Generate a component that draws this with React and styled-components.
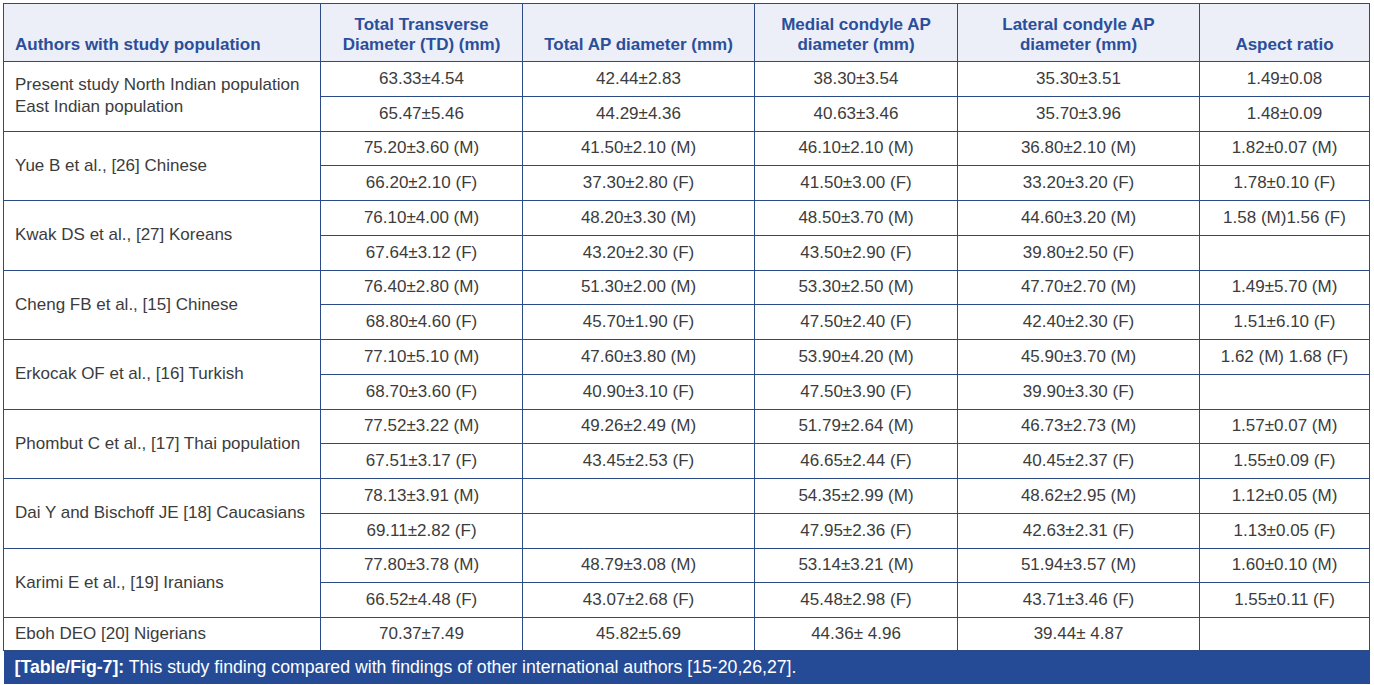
import React from 'react';
import styled, { createGlobalStyle } from 'styled-components';

const colors = {
  border: '#2b4a86',
  headBg: '#eceff7',
  headText: '#2b4e9b',
  text: '#3c3c3c',
  caption: '#254b96'
};

const GlobalStyle = createGlobalStyle`
  html, body {
    margin: 0;
    padding: 0;
    background: #ffffff;
  }
  body {
    font-family: 'Liberation Sans', Arial, Helvetica, sans-serif;
  }
`;

const Page = styled.div`
  padding: 3px 5px 2px 3px;
`;

const Table = styled.table`
  width: 1366px;
  border-collapse: collapse;
  table-layout: fixed;
  font-size: 17px;
  color: ${colors.text};
`;

const HeadCell = styled.th`
  height: 58px;
  box-sizing: border-box;
  padding: 0 14px 6px;
  vertical-align: bottom;
  text-align: ${props => (props.$left ? 'left' : 'center')};
  padding-left: ${props => (props.$left ? '11px' : '14px')};
  background: ${colors.headBg};
  color: ${colors.headText};
  font-weight: bold;
  line-height: 20px;
  border: 1px solid ${colors.border};
`;

const Row = styled.tr`
  height: ${props => props.$h || 34.75}px;
`;

const AuthorCell = styled.td`
  padding: 0 6px 0 11px;
  line-height: 22px;
  vertical-align: middle;
  border: 1px solid ${colors.border};
  white-space: nowrap;
`;

const ValueCell = styled.td`
  padding: 0 4px;
  text-align: center;
  vertical-align: middle;
  line-height: 20px;
  border: 1px solid ${colors.border};
  white-space: nowrap;
`;

const CaptionCell = styled.td`
  height: 33px;
  padding: 0 0 0 11px;
  background: ${colors.caption};
  color: #ffffff;
  font-size: 17.7px;
  vertical-align: middle;
  border: none;
  b {
    font-weight: bold;
  }
`;

const headers = [
  'Authors with study population',
  'Total Transverse Diameter (TD) (mm)',
  'Total AP diameter (mm)',
  'Medial condyle AP diameter (mm)',
  'Lateral condyle AP diameter (mm)',
  'Aspect ratio'
];

const widths = [317, 202, 232, 203, 242, 170];

const groups = [
  {
    author: ['Present study North Indian population', 'East Indian population'],
    rows: [
      ['63.33±4.54', '42.44±2.83', '38.30±3.54', '35.30±3.51', '1.49±0.08'],
      ['65.47±5.46', '44.29±4.36', '40.63±3.46', '35.70±3.96', '1.48±0.09']
    ]
  },
  {
    author: ['Yue B et al., [26] Chinese'],
    rows: [
      ['75.20±3.60 (M)', '41.50±2.10 (M)', '46.10±2.10 (M)', '36.80±2.10 (M)', '1.82±0.07 (M)'],
      ['66.20±2.10 (F)', '37.30±2.80 (F)', '41.50±3.00 (F)', '33.20±3.20 (F)', '1.78±0.10 (F)']
    ]
  },
  {
    author: ['Kwak DS et al., [27] Koreans'],
    rows: [
      ['76.10±4.00 (M)', '48.20±3.30 (M)', '48.50±3.70 (M)', '44.60±3.20 (M)', '1.58 (M)1.56 (F)'],
      ['67.64±3.12 (F)', '43.20±2.30 (F)', '43.50±2.90 (F)', '39.80±2.50 (F)', '']
    ]
  },
  {
    author: ['Cheng FB et al., [15] Chinese'],
    rows: [
      ['76.40±2.80 (M)', '51.30±2.00 (M)', '53.30±2.50 (M)', '47.70±2.70 (M)', '1.49±5.70 (M)'],
      ['68.80±4.60 (F)', '45.70±1.90 (F)', '47.50±2.40 (F)', '42.40±2.30 (F)', '1.51±6.10 (F)']
    ]
  },
  {
    author: ['Erkocak OF et al., [16] Turkish'],
    rows: [
      ['77.10±5.10 (M)', '47.60±3.80 (M)', '53.90±4.20 (M)', '45.90±3.70 (M)', '1.62 (M) 1.68 (F)'],
      ['68.70±3.60 (F)', '40.90±3.10 (F)', '47.50±3.90 (F)', '39.90±3.30 (F)', '']
    ]
  },
  {
    author: ['Phombut C et al., [17] Thai population'],
    rows: [
      ['77.52±3.22 (M)', '49.26±2.49 (M)', '51.79±2.64 (M)', '46.73±2.73 (M)', '1.57±0.07 (M)'],
      ['67.51±3.17 (F)', '43.45±2.53 (F)', '46.65±2.44 (F)', '40.45±2.37 (F)', '1.55±0.09 (F)']
    ]
  },
  {
    author: ['Dai Y and Bischoff JE [18] Caucasians'],
    rows: [
      ['78.13±3.91 (M)', '', '54.35±2.99 (M)', '48.62±2.95 (M)', '1.12±0.05 (M)'],
      ['69.11±2.82 (F)', '', '47.95±2.36 (F)', '42.63±2.31 (F)', '1.13±0.05 (F)']
    ]
  },
  {
    author: ['Karimi E et al., [19] Iranians'],
    rows: [
      ['77.80±3.78 (M)', '48.79±3.08 (M)', '53.14±3.21 (M)', '51.94±3.57 (M)', '1.60±0.10 (M)'],
      ['66.52±4.48 (F)', '43.07±2.68 (F)', '45.48±2.98 (F)', '43.71±3.46 (F)', '1.55±0.11 (F)']
    ]
  },
  {
    author: ['Eboh DEO [20] Nigerians'],
    rows: [['70.37±7.49', '45.82±5.69', '44.36± 4.96', '39.44± 4.87', '']]
  }
];

const Group = ({ group }) => (
  <>
    {group.rows.map((values, i) => (
      <Row key={i} $h={group.rows.length === 1 ? 33 : 34.75}>
        {i === 0 && (
          <AuthorCell rowSpan={group.rows.length}>
            {group.author.map((line, j) => (
              <div key={j}>{line}</div>
            ))}
          </AuthorCell>
        )}
        {values.map((v, k) => (
          <ValueCell key={k}>{v}</ValueCell>
        ))}
      </Row>
    ))}
  </>
);

export default function App() {
  return (
    <Page>
      <GlobalStyle />
      <Table>
        <colgroup>
          {widths.map((w, i) => (
            <col key={i} style={{ width: w }} />
          ))}
        </colgroup>
        <thead>
          <tr>
            {headers.map((h, i) => (
              <HeadCell key={i} $left={i === 0}>
                {h}
              </HeadCell>
            ))}
          </tr>
        </thead>
        <tbody>
          {groups.map((g, i) => (
            <Group key={i} group={g} />
          ))}
          <tr>
            <CaptionCell colSpan={6}>
              <b>[Table/Fig-7]:</b> This study finding compared with findings of other
              international authors [15-20,26,27].
            </CaptionCell>
          </tr>
        </tbody>
      </Table>
    </Page>
  );
}
